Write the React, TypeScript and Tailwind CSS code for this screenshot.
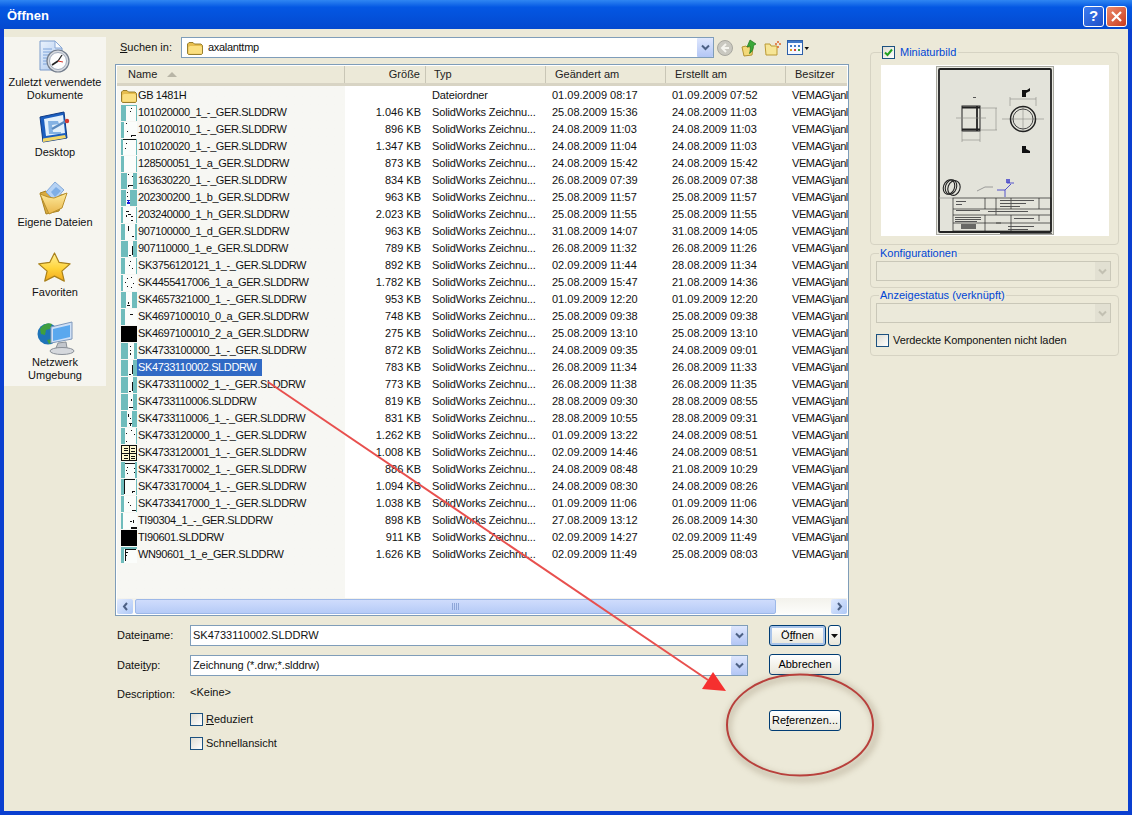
type Thumb = { l: number; r: number; t?: number; marks?: number[][]; fill?: string; grid?: boolean; blue?: boolean };

const files: { name: string; size: string; type: string; mod: string; made: string; thumb?: Thumb; selected?: boolean }[] = [
  { name: "GB 1481H", size: "", type: "Dateiordner", mod: "01.09.2009 08:17", made: "01.09.2009 07:52" },
  { name: "101020000_1_-_GER.SLDDRW", size: "1.046 KB", type: "SolidWorks Zeichnu...", mod: "25.08.2009 15:36", made: "24.08.2009 11:03", thumb: { l: 5, r: 1, t: 1, marks: [[10, 3, 1, 1], [9, 6, 1, 1]] } },
  { name: "101020010_1_-_GER.SLDDRW", size: "896 KB", type: "SolidWorks Zeichnu...", mod: "24.08.2009 11:03", made: "24.08.2009 11:03", thumb: { l: 3, r: 0, marks: [[5, 1, 1, 1], [6, 9, 1, 1], [10, 13, 5, 1], [10, 14, 1, 1]] } },
  { name: "101020020_1_-_GER.SLDDRW", size: "1.347 KB", type: "SolidWorks Zeichnu...", mod: "24.08.2009 11:04", made: "24.08.2009 11:03", thumb: { l: 2, r: 1, marks: [[2, 0, 13, 1], [5, 4, 1, 1], [4, 9, 1, 1]] } },
  { name: "128500051_1_a_GER.SLDDRW", size: "873 KB", type: "SolidWorks Zeichnu...", mod: "24.08.2009 15:42", made: "24.08.2009 15:42", thumb: { l: 3, r: 1 } },
  { name: "163630220_1_-_GER.SLDDRW", size: "834 KB", type: "SolidWorks Zeichnu...", mod: "26.08.2009 07:39", made: "26.08.2009 07:38", thumb: { l: 6, r: 4, marks: [[7, 1, 1, 1], [11, 3, 1, 1], [7, 12, 5, 1], [7, 13, 1, 1]] } },
  { name: "202300200_1_b_GER.SLDDRW", size: "963 KB", type: "SolidWorks Zeichnu...", mod: "25.08.2009 11:57", made: "25.08.2009 11:57", thumb: { l: 5, r: 7, blue: true, marks: [[6, 2, 1, 1], [6, 6, 1, 1]] } },
  { name: "203240000_1_h_GER.SLDDRW", size: "2.023 KB", type: "SolidWorks Zeichnu...", mod: "25.08.2009 11:55", made: "25.08.2009 11:55", thumb: { l: 2, r: 1, marks: [[5, 4, 3, 1], [7, 7, 3, 1], [5, 8, 1, 2], [10, 9, 2, 1], [10, 13, 2, 1]] } },
  { name: "907100000_1_d_GER.SLDDRW", size: "963 KB", type: "SolidWorks Zeichnu...", mod: "31.08.2009 14:07", made: "31.08.2009 14:05", thumb: { l: 4, r: 2, marks: [[7, 2, 1, 5], [11, 12, 2, 1]] } },
  { name: "907110000_1_e_GER.SLDDRW", size: "789 KB", type: "SolidWorks Zeichnu...", mod: "26.08.2009 11:32", made: "26.08.2009 11:26", thumb: { l: 7, r: 4, marks: [[11, 5, 1, 9], [8, 14, 2, 1]] } },
  { name: "SK3756120121_1_-_GER.SLDDRW", size: "892 KB", type: "SolidWorks Zeichnu...", mod: "02.09.2009 11:44", made: "28.08.2009 11:34", thumb: { l: 4, r: 1, marks: [[9, 3, 1, 1], [8, 7, 1, 1], [11, 10, 1, 1]] } },
  { name: "SK4455417006_1_a_GER.SLDDRW", size: "1.782 KB", type: "SolidWorks Zeichnu...", mod: "25.08.2009 15:47", made: "21.08.2009 14:36", thumb: { l: 2, r: 0, marks: [[6, 3, 1, 1], [10, 2, 1, 1], [4, 7, 1, 1], [12, 8, 1, 1], [6, 11, 1, 1], [10, 12, 1, 1]] } },
  { name: "SK4657321000_1_-_GER.SLDDRW", size: "953 KB", type: "SolidWorks Zeichnu...", mod: "01.09.2009 12:20", made: "01.09.2009 12:20", thumb: { l: 5, r: 5, marks: [[7, 10, 1, 2], [6, 13, 3, 1]] } },
  { name: "SK4697100010_0_a_GER.SLDDRW", size: "748 KB", type: "SolidWorks Zeichnu...", mod: "25.08.2009 09:38", made: "25.08.2009 09:38", thumb: { l: 4, r: 0, marks: [[9, 5, 3, 1]] } },
  { name: "SK4697100010_2_a_GER.SLDDRW", size: "275 KB", type: "SolidWorks Zeichnu...", mod: "25.08.2009 13:10", made: "25.08.2009 13:10", thumb: { l: 0, r: 0, fill: "#000" } },
  { name: "SK4733100000_1_-_GER.SLDDRW", size: "872 KB", type: "SolidWorks Zeichnu...", mod: "24.08.2009 09:35", made: "24.08.2009 09:01", thumb: { l: 7, r: 3, marks: [[9, 3, 1, 1], [9, 7, 1, 1], [9, 10, 1, 2]] } },
  { name: "SK4733110002.SLDDRW", size: "783 KB", type: "SolidWorks Zeichnu...", mod: "26.08.2009 11:34", made: "26.08.2009 11:33", selected: true, thumb: { l: 7, r: 4, marks: [[11, 5, 1, 9], [8, 14, 2, 1]] } },
  { name: "SK4733110002_1_-_GER.SLDDRW", size: "773 KB", type: "SolidWorks Zeichnu...", mod: "26.08.2009 11:38", made: "26.08.2009 11:35", thumb: { l: 7, r: 4, marks: [[11, 5, 1, 9], [8, 14, 2, 1]] } },
  { name: "SK4733110006.SLDDRW", size: "819 KB", type: "SolidWorks Zeichnu...", mod: "28.08.2009 09:30", made: "28.08.2009 08:55", thumb: { l: 7, r: 4, marks: [[10, 5, 1, 2], [8, 13, 4, 1]] } },
  { name: "SK4733110006_1_-_GER.SLDDRW", size: "831 KB", type: "SolidWorks Zeichnu...", mod: "28.08.2009 10:55", made: "28.08.2009 09:31", thumb: { l: 6, r: 5, marks: [[7, 3, 1, 3], [9, 7, 1, 1], [8, 12, 3, 1], [9, 13, 1, 2]] } },
  { name: "SK4733120000_1_-_GER.SLDDRW", size: "1.262 KB", type: "SolidWorks Zeichnu...", mod: "01.09.2009 13:22", made: "24.08.2009 08:51", thumb: { l: 4, r: 1, marks: [[10, 2, 1, 1], [5, 5, 1, 1], [13, 6, 1, 1], [5, 13, 1, 1]] } },
  { name: "SK4733120001_1_-_GER.SLDDRW", size: "1.008 KB", type: "SolidWorks Zeichnu...", mod: "02.09.2009 14:46", made: "24.08.2009 08:51", thumb: { l: 0, r: 0, grid: true } },
  { name: "SK4733170002_1_-_GER.SLDDRW", size: "886 KB", type: "SolidWorks Zeichnu...", mod: "24.08.2009 08:48", made: "21.08.2009 10:29", thumb: { l: 4, r: 2, marks: [[4, 1, 10, 1], [6, 5, 1, 1], [5, 8, 1, 1], [6, 11, 1, 1], [13, 6, 1, 1], [13, 10, 1, 1]] } },
  { name: "SK4733170004_1_-_GER.SLDDRW", size: "1.094 KB", type: "SolidWorks Zeichnu...", mod: "24.08.2009 08:30", made: "24.08.2009 08:26", thumb: { l: 3, r: 1, marks: [[3, 0, 1, 15], [4, 0, 10, 1], [11, 12, 3, 1], [11, 13, 1, 1]] } },
  { name: "SK4733417000_1_-_GER.SLDDRW", size: "1.038 KB", type: "SolidWorks Zeichnu...", mod: "01.09.2009 11:06", made: "01.09.2009 11:06", thumb: { l: 3, r: 1, marks: [[7, 6, 1, 1], [9, 9, 1, 1], [11, 14, 4, 1]] } },
  { name: "TI90304_1_-_GER.SLDDRW", size: "898 KB", type: "SolidWorks Zeichnu...", mod: "27.08.2009 13:12", made: "26.08.2009 14:30", thumb: { l: 2, r: 0, marks: [[9, 8, 2, 1], [12, 7, 1, 3], [10, 14, 6, 2]] } },
  { name: "TI90601.SLDDRW", size: "911 KB", type: "SolidWorks Zeichnu...", mod: "02.09.2009 14:27", made: "02.09.2009 11:49", thumb: { l: 0, r: 0, fill: "#000" } },
  { name: "WN90601_1_e_GER.SLDDRW", size: "1.626 KB", type: "SolidWorks Zeichnu...", mod: "02.09.2009 11:49", made: "25.08.2009 08:03", thumb: { l: 3, r: 0, t: 2, marks: [[4, 2, 1, 12], [4, 2, 11, 1], [4, 5, 3, 1], [4, 8, 2, 1]] } },
];

function FolderIcon({ size = 16 }: { size?: number }) {
  return (
    <svg width={size} height={size} viewBox="0 0 16 16" className="shrink-0">
      <path d="M.5 4 2 2.500h4L7.500 4H14l1.500 1.500v8l-1 1h-13l-1-1z" fill="#e6bd4e" stroke="#8f7420" strokeWidth="0.900" />
      <path d="M1.500 7 3 6h10.500L15 7v6l-1 .8H2.500l-1-.8z" fill="#fbdf80" />
    </svg>
  );
}

function FileThumb({ t }: { t: Thumb }) {
  if (t.fill) return <div className="h-4 w-4 shrink-0 bg-black" />;
  if (t.grid) {
    return (
      <svg width="16" height="16" viewBox="0 0 16 16" className="shrink-0" shapeRendering="crispEdges">
        <rect x="0.500" y="0.500" width="15" height="15" fill="#fff8d0" stroke="#111" />
        <path d="M8.500 1v14M3 3.500h4M3 5.500h4M10 3.500h4M10 6.500h4M1 8.500h14M3 10.500h4M3 13.500h4M10 11.500h4M10 13.500h4" fill="none" stroke="#111" />
      </svg>
    );
  }
  return (
    <svg width="16" height="16" viewBox="0 0 16 16" className="shrink-0" shapeRendering="crispEdges">
      <rect width="16" height="16" fill="#fbfdfb" />
      {t.l > 0 && <rect width={t.l} height="16" fill="#6fbcbc" />}
      {t.r > 0 && <rect x={16 - t.r} width={t.r} height="16" fill="#6fbcbc" />}
      {t.t && <rect width="16" height={t.t} fill="#6fbcbc" />}
      {t.marks?.map((m, i) => <rect key={i} x={m[0]} y={m[1]} width={m[2]} height={m[3]} fill="#111" />)}
      {t.blue && <path d="M6 10h3M7 11h1M6 12h3M6 13h3" stroke="#1818d8" />}
    </svg>
  );
}

function RecentIcon() {
  return (
    <svg width="34" height="32" viewBox="0 0 34 32" className="overflow-visible">
      <defs>
        <linearGradient id="recentPage" x1="0" y1="0" x2="1" y2="1">
          <stop offset="0" stopColor="#eaf2fd" />
          <stop offset="1" stopColor="#a9c6ee" />
        </linearGradient>
      </defs>
      <path d="M2 0h15l7 7v22H2z" fill="url(#recentPage)" stroke="#7d9ccb" />
      <path d="M17 0v7h7z" fill="#f8fbff" stroke="#8aa8d4" />
      <path d="M5 8h9M5 11h12M5 14h8M5 17h7M5 20h6M5 23h7" stroke="#7ea4da" />
      <circle cx="20" cy="20" r="11" fill="#d8dbe0" stroke="#737d8c" strokeWidth="1.200" />
      <circle cx="20" cy="20" r="8.500" fill="#fdfdfd" stroke="#a0aabb" />
      <path d="M20 20l-6 4" stroke="#222" strokeWidth="1.600" />
      <path d="M20 20l4-6" stroke="#222" strokeWidth="1.300" />
      <path d="M20 20l5 1" stroke="#d8342a" />
    </svg>
  );
}

function DesktopIcon() {
  return (
    <svg width="34" height="32" viewBox="0 0 34 32" className="overflow-visible">
      <path d="M2 6 26 1l3 26-24 4z" fill="#1c5fc0" stroke="#0e3a86" />
      <path d="M5 27.500 27 24l1 3-23 4z" fill="#f3d86a" />
      <path d="M6 8 25 4l2 18-19 3z" fill="#e3f0fb" />
      <path d="M10 10h10l1 3-7 1 1 7h8v2H11z" fill="#6ba2dd" opacity="0.800" />
      <path d="M14 18 28 10" stroke="#5a8abf" strokeWidth="2.500" />
      <circle cx="29" cy="10" r="2.200" fill="#d63a30" />
    </svg>
  );
}

function DocsIcon() {
  return (
    <svg width="34" height="32" viewBox="0 0 34 32" className="overflow-visible">
      <defs>
        <linearGradient id="docsFront" x1="0" y1="0" x2="0" y2="1">
          <stop offset="0" stopColor="#fdeb9e" />
          <stop offset="1" stopColor="#eab64a" />
        </linearGradient>
      </defs>
      <path d="M2 12l6-2 3 4 4 2 12-3-6 17-13 3z" fill="#d9ab3f" stroke="#a98221" />
      <path d="M8 11 17 1l9 8-2 2-7 9z" fill="#b5d2f4" stroke="#84a8d6" />
      <path d="M13 11l5-5 5 4-6 6z" fill="#7eaee6" />
      <path d="M2 13l8 3 6 1 13-5-5 15-13 6z" fill="url(#docsFront)" stroke="#b98f2c" />
    </svg>
  );
}

function StarIcon() {
  return (
    <svg width="34" height="32" viewBox="0 0 34 32" className="overflow-visible">
      <defs>
        <linearGradient id="starFill" x1="0" y1="0" x2="0" y2="1">
          <stop offset="0" stopColor="#fff09a" />
          <stop offset="0.550" stopColor="#ffd43a" />
          <stop offset="1" stopColor="#f2a81c" />
        </linearGradient>
      </defs>
      <path d="M16.500 2l4.600 9.400 11 1.500-8.200 7.200 2.400 10-9.800-5-9.800 5 2.400-10L.7 12.900l11-1.500z" fill="url(#starFill)" stroke="#a9801a" strokeWidth="1.200" strokeLinejoin="round" />
    </svg>
  );
}

function NetIcon() {
  return (
    <svg width="34" height="32" viewBox="0 0 34 32" className="overflow-visible">
      <circle cx="10" cy="13" r="10.500" fill="#1f74b8" />
      <path d="M2 8c3-5 8-7 12-5l-2 5-4 1-1 5-4-1zM9 19l5-1 1 3-4 2z" fill="#3f9f3f" />
      <path d="M13 6 34 1v17l-21 4z" fill="#cfe0f6" stroke="#7e98bb" />
      <path d="M15 8l17-4v12l-17 4z" fill="#5aa8ee" />
      <path d="M20 22l8-1 1 6H18z" fill="#c2c6cc" stroke="#8a9098" />
      <ellipse cx="24" cy="30" rx="12" ry="3.500" fill="#d5d8dd" stroke="#8a9098" />
    </svg>
  );
}

const places = [
  { icon: RecentIcon, label: ["Zuletzt verwendete", "Dokumente"] },
  { icon: DesktopIcon, label: ["Desktop"] },
  { icon: DocsIcon, label: ["Eigene Dateien"] },
  { icon: StarIcon, label: ["Favoriten"] },
  { icon: NetIcon, label: ["Netzwerk", "Umgebung"] },
];

function ComboArrow({ disabled }: { disabled?: boolean }) {
  return (
    <span className={disabled ? "flex h-full w-[16px] items-center justify-center border-l border-[#ebe9da] bg-[#e2e0d2]" : "flex h-full w-[16px] items-center justify-center rounded-[1px] bg-gradient-to-b from-[#dfe7fd] to-[#b3c6f5]"}>
      <svg width="9" height="7" viewBox="0 0 9 7">
        <path d="M1 1.500 4.500 5 8 1.500" fill="none" stroke={disabled ? "#c2c0b2" : "#4d6185"} strokeWidth="2" />
      </svg>
    </span>
  );
}

function Check({ checked, label }: { checked?: boolean; label?: React.ReactNode }) {
  return (
    <span className="flex items-center gap-[3px]">
      <span className="flex h-[13px] w-[13px] shrink-0 items-center justify-center border border-[#1c5180] bg-gradient-to-br from-[#dfddd3] to-white">
        {checked && (
          <svg width="9" height="9" viewBox="0 0 9 9">
            <path d="M1 4.500 3.500 7 8 1.500" fill="none" stroke="#21a121" strokeWidth="2" />
          </svg>
        )}
      </span>
      {label}
    </span>
  );
}

function Button({ children, main, className }: { children: React.ReactNode; main?: boolean; className?: string }) {
  return (
    <span className={`flex h-[21px] items-center justify-center rounded-[3px] border border-[#003c74] bg-gradient-to-b from-white to-[#e8e6da] text-[11px] text-black ${main ? "shadow-[inset_0_0_0_2px_#a9c4ea]" : ""} ${className ?? ""}`}>
      {children}
    </span>
  );
}

function Drawing() {
  return (
    <svg width="118" height="169" viewBox="0 0 118 169" className="block">
      <rect x="0.500" y="0.500" width="117" height="168" fill="#e9e9e2" stroke="#a8a8a0" />
      <rect x="3" y="3" width="112" height="163" fill="#e3e3da" stroke="#222" strokeWidth="1.800" rx="1" />
      <g fill="none" stroke="#222">
        <rect x="26" y="40" width="18" height="25" strokeWidth="1" />
        <path d="M26 41.500h18M26 63.500h18M41 40v25" strokeWidth="1.800" />
      </g>
      <g fill="none" stroke="#8a8a84" strokeWidth="0.600">
        <path d="M44 42h17M44 64h17M60 42v22M26 66v10M44 66v10M26 74h18M74 40V31M100 40V31M74 33h26M66 53h42M87 40v26M20 52h30" />
      </g>
      <circle cx="87" cy="53" r="12.500" fill="none" stroke="#222" strokeWidth="1.500" />
      <circle cx="87" cy="53" r="10" fill="none" stroke="#444" strokeWidth="1" />
      <path d="M86 24h5l3-2v3l-4 2v4h-4zM86 80h4v3l4 2v2h-8z" fill="#111" />
      <rect x="37" y="31" width="3" height="1" fill="#555" />
      <g fill="none" stroke="#222" strokeWidth="1.100">
        <ellipse cx="13" cy="121" rx="5.500" ry="7.500" transform="rotate(20 13 121)" />
        <ellipse cx="15" cy="121" rx="5.500" ry="7.500" transform="rotate(20 15 121)" />
        <ellipse cx="18" cy="122" rx="6" ry="7.500" transform="rotate(20 18 122)" />
      </g>
      <path d="M41 125l8-4h8" fill="none" stroke="#888" strokeWidth="0.800" />
      <path d="M61 124h8l6-6M69 124v7M71 117h7" fill="none" stroke="#3030c8" strokeWidth="0.800" />
      <rect x="70" y="113" width="4" height="4" fill="#3030c8" opacity="0.700" />
      <g fill="none" stroke="#222" strokeWidth="0.700">
        <path d="M3 132h14" stroke="#888" />
        <rect x="17" y="132" width="98" height="33" />
        <path d="M17 143h98M17 149h98M17 157h48M49 132v11M49 149v16M60 132v17M75 132v11M103 132v11M75 149v17M103 149v6M60 157h55" />
      </g>
      <g fill="#555">
        <rect x="20" y="135" width="10" height="1" />
        <rect x="20" y="138" width="6" height="1" />
        <rect x="20" y="144" width="24" height="1" />
        <rect x="52" y="145" width="40" height="1" />
        <rect x="19" y="151" width="26" height="1" />
        <rect x="19" y="153" width="26" height="1" />
        <rect x="19" y="155" width="22" height="1" />
        <rect x="64" y="134" width="34" height="1" />
        <rect x="64" y="137" width="26" height="1" />
        <rect x="64" y="140" width="20" height="1" />
        <rect x="78" y="152" width="20" height="1" />
        <rect x="72" y="160" width="26" height="1" />
        <rect x="72" y="163" width="20" height="1" />
      </g>
      <rect x="25" y="158" width="15" height="5" fill="#333" opacity="0.700" />
      <rect x="64" y="167" width="52" height="1" fill="#666" />
    </svg>
  );
}

export default function App() {
  return (
    <div className="relative flex h-[815px] w-[1132px] flex-col overflow-hidden bg-[#0a3fd0] font-['Liberation_Sans',sans-serif] text-[11px] text-[#111]">
      <div className="flex h-[29px] shrink-0 items-center justify-between bg-gradient-to-b from-[#2f86f2] via-[#0457e3] via-[25%] to-[#0449cf] pl-[7px] pr-[5px] pt-[3px]">
        <span className="text-[13px] font-bold text-white">Öffnen</span>
        <div className="flex gap-[2px]">
          <span className="flex h-[21px] w-[21px] items-center justify-center rounded-[3px] border border-white bg-gradient-to-br from-[#3d7cf0] to-[#2050c8] text-[15px] font-bold text-white">?</span>
          <span className="flex h-[21px] w-[21px] items-center justify-center rounded-[3px] border border-white bg-gradient-to-br from-[#ec8a6c] to-[#c8391a]">
            <svg width="13" height="13" viewBox="0 0 13 13">
              <path d="M2 2l9 9M11 2l-9 9" stroke="#fff" strokeWidth="2.200" />
            </svg>
          </span>
        </div>
      </div>

      <div className="mx-[4px] mb-[4px] flex min-h-0 flex-1 bg-[#ece9d8]">
        <div className="mt-[8px] h-[349px] w-[102px] shrink-0 bg-[#f6f5ef] pt-[4px]">
          {places.map(({ icon: Icon, label }) => (
            <div key={label[0]} className="flex h-[70px] flex-col items-center">
              <Icon />
              <div className="mt-[3px] text-center text-[11px] leading-[13px]">
                {label.map((l) => <div key={l} className="whitespace-nowrap">{l}</div>)}
              </div>
            </div>
          ))}
        </div>

        <div className="ml-[9px] mt-[8px] w-[734px] shrink-0">
          <div className="flex h-[21px] items-center">
            <span className="ml-[5px] w-[61px]"><u>S</u>uchen in:</span>
            <div className="flex h-[21px] w-[533px] items-center border border-[#7f9db9] bg-white pl-[5px]">
              <FolderIcon />
              <span className="ml-[5px] flex-1 tracking-[-0.3px]">axalanttmp</span>
              <ComboArrow />
            </div>
            <div className="flex items-center">
              <svg width="16" height="16" viewBox="0 0 16 16" className="ml-[3px]">
                <circle cx="8" cy="8" r="7.500" fill="#c9c8c0" stroke="#a8a79f" />
                <path d="M9 4 5 8l4 4M5 8h7" fill="none" stroke="#f4f4ee" strokeWidth="2" />
              </svg>
              <svg width="16" height="18" viewBox="0 0 16 18" className="ml-[8px]">
                <path d="M1 8l4-1 1 1h6l-1 8-8 1z" fill="#f3d978" stroke="#b49332" />
                <path d="M9 1l6 4-2.500 1.500c0 4-2 7-4 8 1-3 1-6 .5-7.500L6 8z" fill="#3aa83a" stroke="#1c761c" strokeWidth="0.700" />
              </svg>
              <svg width="18" height="16" viewBox="0 0 18 16" className="ml-[7px]">
                <path d="M1 4h5l1 2h6v9H2z" fill="#f6e596" stroke="#bb9a34" />
                <path d="M14 1v2M14 6v2M11 4h2M15 4h2" stroke="#e0662a" strokeWidth="1.500" />
              </svg>
              <svg width="22" height="16" viewBox="0 0 22 16" className="ml-[5px]">
                <rect x="0.500" y="0.500" width="15" height="14" fill="#f4f8ff" stroke="#2d5fa8" />
                <rect x="1" y="1" width="14" height="2" fill="#3f78c8" />
                <path d="M3 6h2M7 6h2M11 6h2" stroke="#3f78c8" strokeWidth="2" />
                <path d="M3 10h2" stroke="#d8a020" strokeWidth="2" />
                <path d="M7 10h2" stroke="#d84040" strokeWidth="2" />
                <path d="M11 10h2" stroke="#40a040" strokeWidth="2" />
                <path d="M17.500 7h4.500l-2.250 3z" fill="#111" />
              </svg>
            </div>
          </div>

          <div className="mt-[6px] flex h-[552px] flex-col border border-[#7f9db9] bg-white p-[1px]">
            <div className="grid h-[20px] shrink-0 grid-cols-[228px_81px_120px_120px_120px_1fr] border-b-[3px] border-[#d8d4c4] bg-[#ece9d8] text-[#222]">
              <div className="flex items-center border-r border-[#c9c6b6] pl-[11px]">
                Name
                <svg width="12" height="7" viewBox="0 0 12 7" className="ml-[9px]"><path d="M1 6 6 1l5 5z" fill="#b8b5a6" /></svg>
              </div>
              <div className="flex items-center justify-end border-r border-[#c9c6b6] pr-[5px]">Größe</div>
              <div className="flex items-center border-r border-[#c9c6b6] pl-[8px]">Typ</div>
              <div className="flex items-center border-r border-[#c9c6b6] pl-[9px]">Geändert am</div>
              <div className="flex items-center border-r border-[#c9c6b6] pl-[9px]">Erstellt am</div>
              <div className="flex items-center pl-[9px]">Besitzer</div>
            </div>
            <div className="flex min-h-0 flex-1 flex-col">
              <div className="flex min-h-0 flex-1 bg-gradient-to-r from-[#f7f7f3] from-[228px] to-white to-[228px]">
                <div className="w-full pt-[1px]">
                  {files.map((f) => (
                    <div key={f.name} className="grid h-[17px] grid-cols-[228px_81px_120px_120px_120px_1fr] items-center whitespace-nowrap">
                      <div className="flex h-[17px] items-center pl-[4px]">
                        {f.thumb ? <FileThumb t={f.thumb} /> : <FolderIcon />}
                        <span className={f.selected ? "flex h-[17px] items-center bg-[#316ac5] pl-[1px] pr-[6px] tracking-[-0.38px] text-white" : "pl-[1px] tracking-[-0.38px]"}>{f.name}</span>
                      </div>
                      <div className="pr-[5px] text-right">{f.size}</div>
                      <div className="pl-[6px] tracking-[-0.15px]">{f.type}</div>
                      <div className="pl-[6px]">{f.mod}</div>
                      <div className="pl-[6px]">{f.made}</div>
                      <div className="pl-[6px] tracking-[-0.4px]">VEMAG\janl</div>
                    </div>
                  ))}
                </div>
              </div>
              <div className="flex h-[16px] shrink-0 items-center bg-gradient-to-b from-[#f3f2ec] to-[#fdfdfb]">
                <span className="flex h-[15px] w-[16px] items-center justify-center rounded-[2px] bg-gradient-to-br from-[#e1eafe] to-[#aec8f6]">
                  <svg width="7" height="9" viewBox="0 0 7 9"><path d="M5 1 2 4.500 5 8" fill="none" stroke="#4d6185" strokeWidth="2" /></svg>
                </span>
                <span className="ml-[2px] flex h-[15px] w-[641px] items-center justify-center rounded-[2px] border border-[#9db8e8] bg-gradient-to-b from-[#cfdcfc] to-[#b6cbf7]">
                  <svg width="8" height="7" viewBox="0 0 8 7"><path d="M.500 0v7M2.500 0v7M4.500 0v7M6.500 0v7" stroke="#8ea6d8" /></svg>
                </span>
                <span className="flex-1" />
                <span className="flex h-[15px] w-[16px] items-center justify-center rounded-[2px] bg-gradient-to-br from-[#e1eafe] to-[#aec8f6]">
                  <svg width="7" height="9" viewBox="0 0 7 9"><path d="M2 1l3 3.500L2 8" fill="none" stroke="#4d6185" strokeWidth="2" /></svg>
                </span>
              </div>
            </div>
          </div>

          <div className="mt-[9px] flex">
            <div className="ml-[2px] w-[631px]">
              <div className="flex h-[21px] items-center">
                <span className="w-[73px]">Datei<u>n</u>ame:</span>
                <div className="flex h-full flex-1 items-center border border-[#7f9db9] bg-white pl-[2px]">
                  <span className="flex-1">SK4733110002.SLDDRW</span>
                  <ComboArrow />
                </div>
              </div>
              <div className="mt-[9px] flex h-[21px] items-center">
                <span className="w-[73px]">Datei<u>t</u>yp:</span>
                <div className="flex h-full flex-1 items-center border border-[#7f9db9] bg-white pl-[2px]">
                  <span className="flex-1 tracking-[-0.1px]">Zeichnung (*.drw;*.slddrw)</span>
                  <ComboArrow />
                </div>
              </div>
              <div className="mt-[8px] flex h-[20px]">
                <span className="mt-[2px] w-[73px]">Description:</span>
                <span>&lt;Keine&gt;</span>
              </div>
              <div className="ml-[73px] mt-[9px] flex flex-col gap-[11px] leading-[13px]">
                <Check label={<span><u>R</u>eduziert</span>} />
                <Check label="Schnellansicht" />
              </div>
            </div>
            <div className="ml-[21px] w-[72px]">
              <div className="flex gap-[2px]">
                <Button main className="flex-1"><span>Ö<u>f</u>fnen</span></Button>
                <Button className="w-[13px]">
                  <svg width="7" height="4" viewBox="0 0 7 4"><path d="M0 0h7L3.500 4z" fill="#111" /></svg>
                </Button>
              </div>
              <Button className="mt-[8px]">Abbrechen</Button>
              <Button className="mt-[35px]"><span>Re<u>f</u>erenzen...</span></Button>
            </div>
          </div>
        </div>

        <div className="ml-[21px] mt-[16px] w-[249px] shrink-0 leading-[14px]">
          <fieldset className="rounded-[4px] border border-[#d6d3c3] pb-[8px]">
            <legend className="ml-[11px] pr-[2px] text-[#0046d5]">
              <Check checked label={<span className="ml-[2px]">Miniaturbild</span>} />
            </legend>
            <div className="ml-[10px] mt-[6px] flex h-[171px] w-[228px] justify-center bg-white pt-[1px]">
              <Drawing />
            </div>
          </fieldset>
          <fieldset className="mt-[1px] rounded-[4px] border border-[#d6d3c3] pb-[6px]">
            <legend className="ml-[8px] px-[1px] text-[#0046d5]">Konfigurationen</legend>
            <div className="ml-[5px] mt-[1px] flex h-[20px] w-[235px] justify-end border border-[#c9c7b8] bg-[#ebe9da]">
              <ComboArrow disabled />
            </div>
          </fieldset>
          <fieldset className="rounded-[4px] border border-[#d6d3c3] pb-[8px]">
            <legend className="ml-[8px] px-[1px] text-[#0046d5]">Anzeigestatus (verknüpft)</legend>
            <div className="ml-[5px] mt-[1px] flex h-[20px] w-[235px] justify-end border border-[#c9c7b8] bg-[#ebe9da]">
              <ComboArrow disabled />
            </div>
            <div className="ml-[5px] mt-[10px]">
              <Check label={<span className="ml-[1px] tracking-[-0.1px]">Verdeckte Komponenten nicht laden</span>} />
            </div>
          </fieldset>
        </div>
      </div>

      <svg width="1132" height="815" viewBox="0 0 1132 815" className="pointer-events-none absolute left-0 top-0">
        <path d="M268 382 708 680" stroke="#e8504e" strokeWidth="2" fill="none" />
        <path d="M726 691 702 689 713 672z" fill="#f5302f" />
        <ellipse cx="802" cy="728" rx="74" ry="51" fill="none" stroke="#8a7a60" strokeWidth="6" opacity="0.350" className="blur-[3px]" />
        <ellipse cx="800" cy="725" rx="73" ry="50.500" fill="none" stroke="#b8403c" strokeWidth="2" />
      </svg>
    </div>
  );
}
